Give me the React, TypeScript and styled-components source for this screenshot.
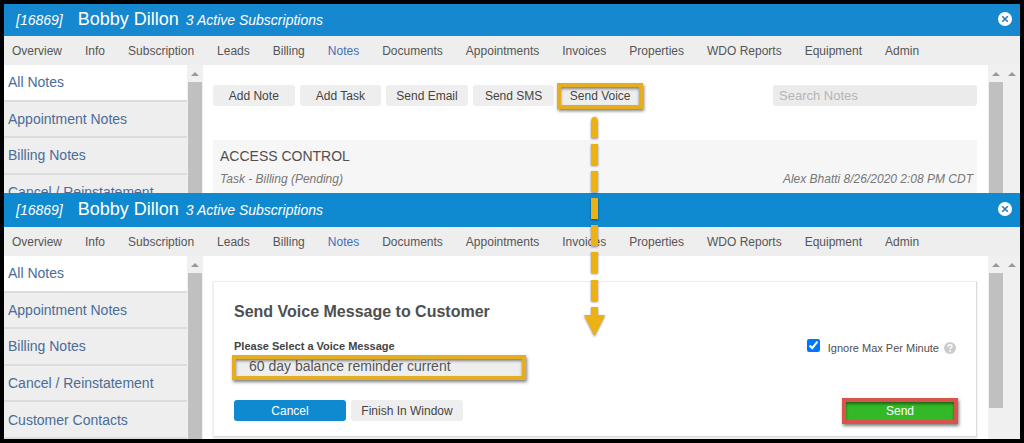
import React from "react";
import styled, { createGlobalStyle } from "styled-components";

const GlobalStyle = createGlobalStyle`
  *, *::before, *::after { box-sizing: border-box; }
  body {
    margin: 0;
    background: #000;
    font-family: "Liberation Sans", Arial, sans-serif;
    font-size: 12px;
    color: #4f4f4f;
  }
  button, input, select { font-family: inherit; margin: 0; }
  h1, h2, h3, p, ul { margin: 0; padding: 0; }
`;

const Page = styled.div`
  position: relative;
  display: flex;
  flex-direction: column;
  padding: 4px;
`;

const Window = styled.section`
  display: flex;
  flex-direction: column;
  background: #fff;
`;

const TitleBar = styled.header<{ $tall?: boolean }>`
  display: flex;
  justify-content: space-between;
  align-items: center;
  height: ${(p) => (p.$tall ? 34 : 32)}px;
  padding: 0 8px 2px 12px;
  background: ${(p) => (p.$tall ? "#0f8ad0" : "#1588cf")};
  color: #fff;
`;

const Title = styled.h1`
  display: flex;
  align-items: baseline;
  font-size: 18px;
  line-height: 24px;
  font-weight: 400;
  white-space: nowrap;
`;

const TitleDetail = styled.em`
  font-size: 14px;
`;

const CustomerName = styled.span`
  margin: 0 7px 0 15px;
`;

const CloseButton = styled.button`
  display: flex;
  padding: 0;
  border: 0;
  background: none;
  cursor: pointer;
`;

const Nav = styled.nav`
  display: flex;
  align-items: center;
  gap: 23px;
  height: 29px;
  padding-left: 8px;
  background: #eee;
  overflow: hidden;
`;

const NavLink = styled.a<{ $active?: boolean }>`
  color: ${(p) => (p.$active ? "#3f6fb8" : "#555")};
  line-height: 16px;
  text-decoration: none;
  white-space: nowrap;
`;

const Body = styled.div<{ $clipped?: boolean }>`
  display: flex;
  overflow: hidden;
  ${(p) => p.$clipped && "max-height: 128px;"}
`;

const Sidebar = styled.ul`
  display: grid;
  grid-auto-rows: 1fr;
  flex: none;
  width: 183px;
  min-height: 183px;
  list-style: none;
`;

const SidebarItem = styled.li<{ $active?: boolean }>`
  display: flex;
  align-items: center;
  padding-left: 4px;
  border-bottom: 2px solid #dcdcdc;
  background: ${(p) => (p.$active ? "#fff" : "#eee")};
`;

const SidebarLink = styled.a`
  color: #4a6c98;
  font-size: 14px;
  line-height: 20px;
  text-decoration: none;
`;

const Track = styled.div`
  display: flex;
  flex-direction: column;
  align-items: center;
  flex: none;
  width: 16px;
  background: #f0f0f0;
`;

const TrackArrow = styled.div`
  display: flex;
  align-items: center;
  justify-content: center;
  flex: none;
  height: 17px;
`;

const Thumb = styled.div<{ $partial?: boolean }>`
  flex: ${(p) => (p.$partial ? "0 0 74%" : "1")};
  width: 14px;
  background: #c0c0c0;
`;

const Main = styled.main<{ $top: number }>`
  flex: 1;
  min-width: 0;
  padding: ${(p) => p.$top}px 11px 2px 10px;
`;

const Toolbar = styled.div`
  display: flex;
  justify-content: space-between;
  margin-bottom: 34px;
`;

const ToolbarButtons = styled.div`
  display: grid;
  grid-template-columns: repeat(5, 1fr);
  gap: 5px;
  width: 428px;
`;

const Button = styled.button<{ $tone?: "blue" | "green" }>`
  width: 100%;
  height: 21px;
  padding: 0;
  border: 0;
  border-radius: 3px;
  background: ${(p) => (p.$tone === "blue" ? "#0f8ad0" : p.$tone === "green" ? "#33b927" : "#eee")};
  color: ${(p) => (p.$tone ? "#fff" : "#444")};
  font-size: 12px;
  line-height: 20px;
  white-space: nowrap;
  cursor: pointer;
`;

const Highlight = styled.div<{ $color: string }>`
  position: relative;
  &::after {
    content: "";
    position: absolute;
    inset: -2px -2px -3px;
    border: 4px solid ${(p) => p.$color};
    box-shadow: 1px 2px 3px rgba(0, 0, 0, 0.5), inset 0 2px 3px rgba(0, 0, 0, 0.45);
    pointer-events: none;
  }
`;

const SearchInput = styled.input`
  width: 204px;
  height: 21px;
  padding: 0 6px;
  border: 0;
  border-radius: 3px;
  background: #ebebeb;
  font-size: 13px;
  &::placeholder { color: #b5b5b5; }
`;

const NoteCard = styled.article`
  padding: 6px 4px 6px 7px;
  background: #f6f6f6;
`;

const NoteTitle = styled.h2`
  margin-bottom: 5px;
  font-size: 14px;
  line-height: 20px;
  font-weight: 400;
`;

const NoteMeta = styled.p`
  display: flex;
  justify-content: space-between;
  color: #777;
  font-style: italic;
  line-height: 16px;
`;

const FormCard = styled.form`
  padding: 20px 20px 15px;
  border: 1px solid #eee;
  border-right-color: #ddd;
  border-bottom-color: #ddd;
  box-shadow: 0 1px 2px rgba(0, 0, 0, 0.15);
`;

const FormTitle = styled.h2`
  margin-bottom: 16px;
  font-size: 16px;
  line-height: 20px;
  font-weight: 700;
`;

const FormRow = styled.div`
  display: flex;
  justify-content: space-between;
  align-items: flex-start;
  margin-bottom: 23px;
`;

const Field = styled.div`
  display: flex;
  flex-direction: column;
  gap: 3px;
  width: 290px;
`;

const FieldLabel = styled.label`
  font-size: 11px;
  line-height: 16px;
  font-weight: 700;
  color: #444;
`;

const Select = styled.select`
  appearance: none;
  display: block;
  width: 100%;
  height: 20px;
  padding: 0 15px 2px;
  border: 0;
  border-radius: 0;
  background: #eee;
  color: #555;
  font-size: 14px;
`;

const CheckLabel = styled.label`
  display: flex;
  align-items: center;
  font-size: 11px;
  line-height: 20px;
`;

const CheckBox = styled.input`
  && { margin: 0 8px 5px 0; }
  width: 13px;
  height: 13px;
`;

const HelpIcon = styled.svg`
  margin-left: 5px;
`;

const Actions = styled.div`
  display: grid;
  grid-template-columns: 112px 112px 1fr 112px;
  gap: 5px;
`;

const SendSlot = styled(Highlight)`
  grid-column: 4;
`;

const FlowArrow = styled.svg`
  position: absolute;
  top: 114px;
  left: 580px;
  pointer-events: none;
  filter: drop-shadow(0 1px 1px rgba(0, 0, 0, 0.45));
`;

const tabs = [
  "Overview", "Info", "Subscription", "Leads", "Billing", "Notes", "Documents",
  "Appointments", "Invoices", "Properties", "WDO Reports", "Equipment", "Admin",
];

const categories = [
  "All Notes", "Appointment Notes", "Billing Notes", "Cancel / Reinstatement", "Customer Contacts",
];

const gold = "#e5ae20";

function ScrollTrack({ thumb }: { thumb?: "full" | "partial" }) {
  return (
    <Track>
      <TrackArrow>
        <svg width="8" height="4" viewBox="0 0 8 4"><path d="M0 4 4 0l4 4z" fill="#999" /></svg>
      </TrackArrow>
      {thumb && <Thumb $partial={thumb === "partial"} />}
    </Track>
  );
}

function CustomerWindow({ tall, clipped, top, children }: {
  tall?: boolean; clipped?: boolean; top: number; children: React.ReactNode;
}) {
  return (
    <Window>
      <TitleBar $tall={tall}>
        <Title>
          <TitleDetail>[16869]</TitleDetail>
          <CustomerName>Bobby Dillon</CustomerName>
          <TitleDetail>3 Active Subscriptions</TitleDetail>
        </Title>
        <CloseButton aria-label="Close">
          <svg width="14" height="14" viewBox="0 0 14 14">
            <circle cx="7" cy="7" r="7" fill="#fff" />
            <path d="m4.200 4.200 5.600 5.600m0-5.600-5.600 5.600" stroke="#2b78ac" strokeWidth="1.500" />
          </svg>
        </CloseButton>
      </TitleBar>
      <Nav>
        {tabs.map((t) => <NavLink key={t} href="#" $active={t === "Notes"}>{t}</NavLink>)}
      </Nav>
      <Body $clipped={clipped}>
        <Sidebar>
          {categories.map((c, i) => (
            <SidebarItem key={c} $active={i === 0}><SidebarLink href="#">{c}</SidebarLink></SidebarItem>
          ))}
        </Sidebar>
        <ScrollTrack thumb="full" />
        <Main $top={top}>{children}</Main>
        <ScrollTrack thumb={clipped ? "full" : "partial"} />
        <ScrollTrack />
      </Body>
    </Window>
  );
}

export default function App() {
  return (
    <>
      <GlobalStyle />
      <Page>
        <CustomerWindow clipped top={20}>
          <Toolbar>
            <ToolbarButtons>
              <Button>Add Note</Button>
              <Button>Add Task</Button>
              <Button>Send Email</Button>
              <Button>Send SMS</Button>
              <Highlight $color={gold}><Button>Send Voice</Button></Highlight>
            </ToolbarButtons>
            <SearchInput type="search" placeholder="Search Notes" aria-label="Search Notes" />
          </Toolbar>
          <NoteCard>
            <NoteTitle>ACCESS CONTROL</NoteTitle>
            <NoteMeta>
              <span>Task - Billing (Pending)</span>
              <span>Alex Bhatti 8/26/2020 2:08 PM CDT</span>
            </NoteMeta>
          </NoteCard>
        </CustomerWindow>
        <CustomerWindow tall top={25}>
          <FormCard onSubmit={(e) => e.preventDefault()}>
            <FormTitle>Send Voice Message to Customer</FormTitle>
            <FormRow>
              <Field>
                <FieldLabel htmlFor="voice-message">Please Select a Voice Message</FieldLabel>
                <Highlight $color={gold}>
                  <Select id="voice-message">
                    <option>60 day balance reminder current</option>
                  </Select>
                </Highlight>
              </Field>
              <CheckLabel>
                <CheckBox type="checkbox" defaultChecked />
                Ignore Max Per Minute
                <HelpIcon width="12" height="12" viewBox="0 0 12 12">
                  <circle cx="6" cy="6" r="6" fill="#ccc" />
                  <path d="M4 4.7c0-2.6 4-2.5 4-.3C8 5.8 6 5.800 6 7.300" fill="none" stroke="#fff" strokeWidth="1.400" />
                  <circle cx="6" cy="9.200" r=".9" fill="#fff" />
                </HelpIcon>
              </CheckLabel>
            </FormRow>
            <Actions>
              <Button type="button" $tone="blue">Cancel</Button>
              <Button type="button">Finish In Window</Button>
              <SendSlot $color="#d9534c"><Button type="submit" $tone="green">Send</Button></SendSlot>
            </Actions>
          </FormCard>
        </CustomerWindow>
        <FlowArrow width="30" height="226" viewBox="0 0 30 226" fill="#edb111">
          <path d="M11 24V8c0-7 7-7 7 0v16z" />
          <path d="M11 30h7v21h-7zM11 57h7v21h-7zM11 84h7v21h-7zM11 111h7v21h-7zM11 138h7v21h-7zM11 166h7v21h-7z" />
          <path d="M11 193h7v8h7l-10.500 21L4 201h7z" />
        </FlowArrow>
      </Page>
    </>
  );
}
